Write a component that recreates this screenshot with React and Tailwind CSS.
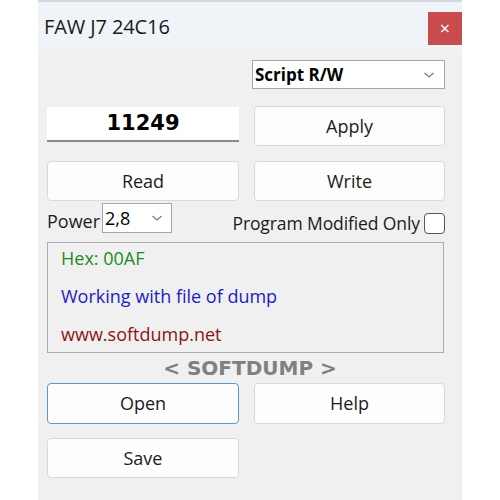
import React from 'react'

const font = { fontFamily: '"Open Sans", "Noto Sans", sans-serif' }

const Btn = ({ children, focused }) => (
  <button
    type="button"
    className={
      focused
        ? 'h-full w-full rounded-[4px] border border-[#5b9bc0] bg-[#fdfdfd] text-[18px] text-[#1b1b1b]'
        : 'h-full w-full rounded-[4px] border border-[#d9d9d9] bg-[#fdfdfd] text-[18px] text-[#1b1b1b]'
    }
  >
    {children}
  </button>
)

const Chevron = () => (
  <svg width="12" height="8" viewBox="0 0 12 8" fill="none" stroke="#777" strokeWidth="1.1">
    <path d="M1.5 2 L6 6 L10.5 2" />
  </svg>
)

export default function App() {
  return (
    <div className="w-[500px] h-[500px] bg-white overflow-hidden" style={font}>
      <div className="ml-[38px] w-[424px] h-[500px] flex flex-col bg-[#f0f0f0] border-t-2 border-[#d4d8dc]">
        {/* title bar */}
        <div className="h-[47px] bg-[#eef4f8] flex items-start justify-between pl-[6px]">
          <span className="text-[20px] text-[#1a1a1a] mt-[10px] tracking-[-0.1px]">FAW J7 24C16</span>
          <div className="w-[34px] h-[33px] mt-[10px] bg-[#c94c4c] flex items-center justify-center text-white text-[18px]">
            ×
          </div>
        </div>

        <div className="flex flex-col pl-[9px] pr-[17px] pt-[11px]">
          <div className="flex justify-end">
            <div className="w-[193px] h-[29px] bg-white border border-[#a6a6a6] flex items-center justify-between pl-[2px] pr-[9px]">
              <span className="text-[17px] font-bold text-black">Script R/W</span>
              <Chevron />
            </div>
          </div>

          <div className="grid grid-cols-[192px_191px] justify-between h-[40px] mt-[17px]">
            <div
              className="mt-[1px] h-[35px] bg-white border-b-2 border-[#8a8a8a] flex items-center justify-center text-[21px] font-bold text-black"
              style={{ fontFamily: '"DejaVu Sans", Verdana, sans-serif' }}
            >
              11249
            </div>
            <Btn>Apply</Btn>
          </div>

          <div className="grid grid-cols-[192px_191px] justify-between h-[40px] mt-[15px]">
            <Btn>Read</Btn>
            <Btn>Write</Btn>
          </div>

          <div className="flex items-center justify-between h-[30px] mt-[2px]">
            <div className="flex items-center gap-[2px]">
              <span className="text-[18px] text-[#1b1b1b] mt-[6px]">Power</span>
              <div className="w-[70px] h-[30px] bg-white border border-[#a6a6a6] flex items-center justify-between pl-[2px] pr-[8px]">
                <span className="text-[18px] text-black">2,8</span>
                <Chevron />
              </div>
            </div>
            <div className="flex items-center gap-[4px] mt-[10px]">
              <span className="text-[17.5px] text-[#1b1b1b] tracking-[-0.1px]">Program Modified Only</span>
              <div className="w-[21px] h-[21px] bg-white border border-[#555] rounded-[4px]" />
            </div>
          </div>

          <div className="mt-[9px] h-[111px] mr-[1px] border border-[#adadad] flex flex-col pl-[13px] pt-[2px] text-[18px]">
            <span className="text-[#1e8a1e] h-[38px]">Hex: 00AF</span>
            <span className="text-[#1c1cc4] h-[38px]">Working with file of dump</span>
            <span className="text-[#8c1414]">www.softdump.net</span>
          </div>

          <div
            className="h-[30px] pl-[8px] flex items-center justify-center text-[20px] font-bold text-[#808080]"
            style={{ fontFamily: '"DejaVu Sans", Verdana, sans-serif' }}
          >
            &lt; SOFTDUMP &gt;
          </div>

          <div className="grid grid-cols-[192px_191px] justify-between h-[41px]">
            <Btn focused>Open</Btn>
            <Btn>Help</Btn>
          </div>

          <div className="grid grid-cols-[192px_191px] justify-between h-[40px] mt-[14px]">
            <Btn>Save</Btn>
          </div>
        </div>
      </div>
    </div>
  )
}
